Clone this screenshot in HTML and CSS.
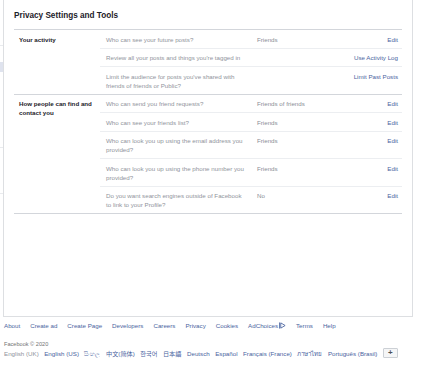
FILE: index.html
```html
<!DOCTYPE html>
<html lang="en">

<head>
    <meta charset="UTF-8">
    <meta name="viewport" content="width=device-width, initial-scale=1.0">
    <title>Privacy Settings and Tools</title>

    <link rel="stylesheet" href="styles.css">
</head>

<body>
    <div class="page">
        <div class="side-nav">
            <div class="nav-item first"></div>
            <div class="nav-gap"></div>
            <div class="nav-item active"></div>
            <div class="nav-item tall"></div>
            <div class="nav-item mid"></div>
        </div>

        <div class="panel">
            <h2 class="panel-title">Privacy Settings and Tools</h2>

            <div class="settings">
                <div class="section">
                    <div class="section-label">Your activity</div>
                    <div class="rows">
                        <div class="row">
                            <div class="question">Who can see your future posts?</div>
                            <div class="value">Friends</div>
                            <a class="action" href="#">Edit</a>
                        </div>
                        <div class="row">
                            <div class="question">Review all your posts and things you're tagged in</div>
                            <div class="value"></div>
                            <a class="action" href="#">Use Activity Log</a>
                        </div>
                        <div class="row">
                            <div class="question">Limit the audience for posts you've shared with friends of friends or Public?</div>
                            <div class="value"></div>
                            <a class="action" href="#">Limit Past Posts</a>
                        </div>
                    </div>
                </div>

                <div class="section">
                    <div class="section-label">How people can find and contact you</div>
                    <div class="rows">
                        <div class="row">
                            <div class="question">Who can send you friend requests?</div>
                            <div class="value">Friends of friends</div>
                            <a class="action" href="#">Edit</a>
                        </div>
                        <div class="row">
                            <div class="question">Who can see your friends list?</div>
                            <div class="value">Friends</div>
                            <a class="action" href="#">Edit</a>
                        </div>
                        <div class="row">
                            <div class="question">Who can look you up using the email address you provided?</div>
                            <div class="value">Friends</div>
                            <a class="action" href="#">Edit</a>
                        </div>
                        <div class="row">
                            <div class="question">Who can look you up using the phone number you provided?</div>
                            <div class="value">Friends</div>
                            <a class="action" href="#">Edit</a>
                        </div>
                        <div class="row">
                            <div class="question">Do you want search engines outside of Facebook to link to your Profile?</div>
                            <div class="value">No</div>
                            <a class="action" href="#">Edit</a>
                        </div>
                    </div>
                </div>
            </div>
        </div>
    </div>

    <footer class="footer">
        <div class="footer-links">
            <a href="#">About</a>
            <a href="#">Create ad</a>
            <a href="#">Create Page</a>
            <a href="#">Developers</a>
            <a href="#">Careers</a>
            <a href="#">Privacy</a>
            <a href="#">Cookies</a>
            <a href="#" class="adchoices">AdChoices
                <svg viewBox="0 0 8 8" width="7" height="7" fill="none" stroke="currentColor" stroke-width="1">
                    <polyline points="0.5 0.5 0.5 7.5"></polyline>
                    <polygon points="2 1 7 4 2 7"></polygon>
                </svg>
            </a>
            <a href="#">Terms</a>
            <a href="#">Help</a>
        </div>

        <div class="copyright">Facebook © 2020</div>

        <div class="languages">
            <span class="current">English (UK)</span>
            <a href="#">English (US)</a>
            <a href="#">සිංහල</a>
            <a href="#">中文(简体)</a>
            <a href="#">한국어</a>
            <a href="#">日本語</a>
            <a href="#">Deutsch</a>
            <a href="#">Español</a>
            <a href="#">Français (France)</a>
            <a href="#">ภาษาไทย</a>
            <a href="#">Português (Brasil)</a>
            <button class="more-langs">+</button>
        </div>
    </footer>
</body>

</html>
```

FILE: styles.css
```css
body {
    margin: 0;
    background: #fff;
    font-family: 'Liberation Sans', Helvetica, Arial, 'Noto Sans CJK SC', sans-serif;
    font-size: 6.2px;
    color: #1d2129;
}

a {
    color: #4a64a0;
    text-decoration: none;
}

.page {
    display: flex;
}

/* the cut-off left column */
.side-nav {
    width: 3px;
    display: flex;
    flex-direction: column;
}

.nav-item { border-bottom: 1px solid #e9ebee; }
.nav-item.first { height: 45px; }
.nav-gap { height: 16px; }
.nav-item.active { height: 10px; background: #dfe3ee; border-bottom: none; }
.nav-item.tall { height: 75px; }
.nav-item.mid { height: 45px; }

.panel {
    width: 408px;
    height: 316px;
    border: 1px solid #dddfe2;
    border-top: none;
    background: #fff;
}

.panel-title {
    margin: 0;
    padding: 10.5px 10px 0;
    font-size: 8.2px;
    line-height: 10px;
    font-weight: bold;
    color: #1d2129;
}

.settings {
    margin: 8.5px 10px 0;
    border-bottom: 1px solid #d3d6db;
}

.section {
    display: grid;
    grid-template-columns: 86px 1fr;
    border-top: 1px solid #d3d6db;
}

.section-label {
    padding: 4.5px 6px 0 5px;
    line-height: 9px;
    font-weight: bold;
    color: #1d2129;
}

.row {
    display: grid;
    grid-template-columns: 157px 1fr auto;
    padding: 4.5px 0 4px;
    line-height: 9px;
    border-bottom: 1px solid #eceef1;
}

.row:last-child {
    border-bottom: none;
}

.question {
    padding: 0 9px 0 6px;
    color: #90949c;
}

.value {
    color: #8a8e96;
}

.action {
    padding-right: 4px;
    text-align: right;
}

.footer {
    padding: 4px 0 0 4px;
    line-height: 9px;
}

.footer-links {
    display: flex;
    gap: 10px;
}

.adchoices {
    display: flex;
    align-items: center;
    gap: 1px;
}

.copyright {
    margin-top: 10px;
    font-size: 5.6px;
    color: #737373;
}

.languages {
    display: flex;
    align-items: center;
    gap: 5.5px;
    height: 10px;
    margin-top: -1px;
}

.languages a,
.languages span {
    line-height: 9px;
}

.languages .current {
    color: #90949c;
}

.more-langs {
    width: 15px;
    height: 10px;
    padding: 0;
    border: 1px solid #ccd0d5;
    border-radius: 1px;
    background: #f5f6f7;
    color: #4b4f56;
    font-family: inherit;
    font-size: 8px;
    line-height: 8px;
    font-weight: bold;
}
```
